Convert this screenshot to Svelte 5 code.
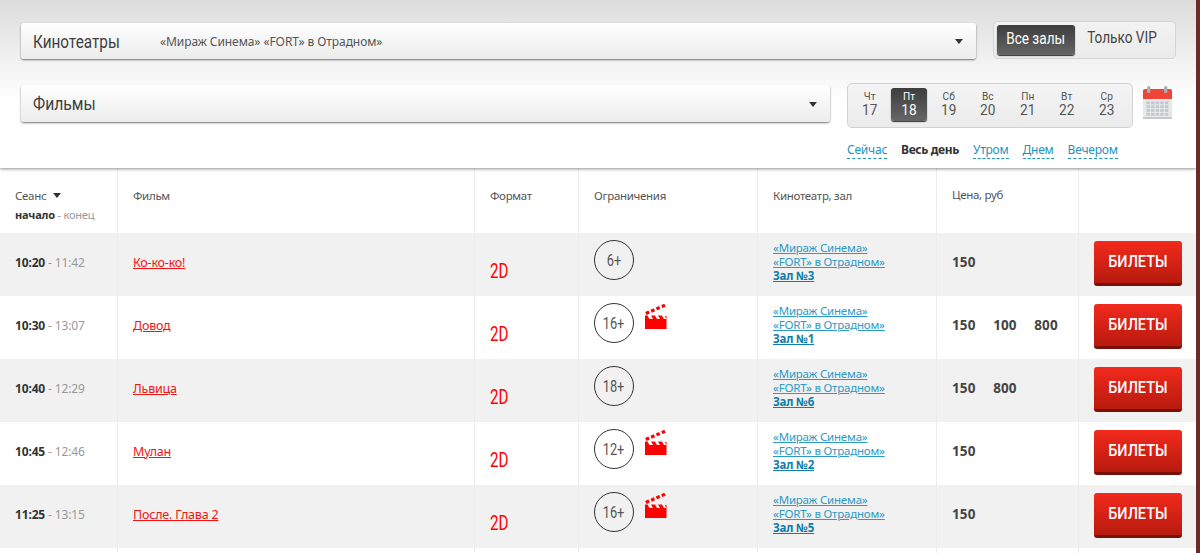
<script>
  const days = [['Чт',17],['Пт',18],['Сб',19],['Вс',20],['Пн',21],['Вт',22],['Ср',23]];
  const times = [['Сейчас',true],['Весь день',false],['Утром',true],['Днем',true],['Вечером',true]];
  const rows = [
    {s:'10:20',e:'11:42',f:'Ко-ко-ко!',a:'6+',c:false,h:3,p:[150]},
    {s:'10:30',e:'13:07',f:'Довод',a:'16+',c:true,h:1,p:[150,100,800]},
    {s:'10:40',e:'12:29',f:'Львица',a:'18+',c:false,h:6,p:[150,800]},
    {s:'10:45',e:'12:46',f:'Мулан',a:'12+',c:true,h:2,p:[150]},
    {s:'11:25',e:'13:15',f:'После. Глава 2',a:'16+',c:true,h:5,p:[150]}
  ];
</script>

<div class="page">
  <header class="filters">
    <div class="line first">
      <div class="select wide">
        <span class="sel-label"><span class="narrow">Кинотеатры</span></span>
        <span class="sel-value">«Мираж Синема» «FORT» в Отрадном»</span>
        <i class="caret"></i>
      </div>
      <div class="toggle">
        <span class="tg active"><span class="narrow">Все залы</span></span>
        <span class="tg vip"><span class="narrow">Только VIP</span></span>
      </div>
    </div>
    <div class="line second">
      <div class="select films">
        <span class="sel-label"><span class="narrow">Фильмы</span></span>
        <i class="caret"></i>
      </div>
      <div class="datecol">
        <div class="daterow">
          <div class="dates">
            {#each days as d, i}
              <div class="day" class:on={i===1}><span class="dn">{d[0]}</span><span class="dd">{d[1]}</span></div>
            {/each}
          </div>
          <svg class="cal" width="29" height="33" viewBox="0 0 29 33">
            <rect x="0" y="3" width="29" height="30" rx="1" fill="#e6e9ea"/>
            <rect x="0" y="31" width="29" height="2" fill="#c6cacc"/>
            <path d="M0 13V5a2 2 0 0 1 2-2h25a2 2 0 0 1 2 2v8z" fill="#f04438"/>
            <rect x="4" y="0" width="3.400" height="7" rx="1.500" fill="#a9aeb0"/>
            <rect x="21" y="0" width="3.400" height="7" rx="1.500" fill="#a9aeb0"/>
            {#each [0,1,2,3] as r}{#each [0,1,2,3,4] as c}
              <rect x={3.500+c*4.600} y={15.500+r*3.800} width="3.400" height="2.800" fill="#c3c8ca"/>
            {/each}{/each}
          </svg>
        </div>
        <div class="times">
          {#each times as t}
            <span class:lnk={t[1]} class:cur={!t[1]}>{t[0]}</span>
          {/each}
        </div>
      </div>
    </div>
  </header>

  <div class="table">
    <div class="row head">
      <div class="c c1"><div>Сеанс <i class="caret small"></i></div><div class="sub"><b>начало</b> <span>- конец</span></div></div>
      <div class="c c2">Фильм</div>
      <div class="c c3">Формат</div>
      <div class="c c4">Ограничения</div>
      <div class="c c5">Кинотеатр, зал</div>
      <div class="c c6 price-h">Цена, руб</div>
      <div class="c c7"></div>
    </div>
    {#each rows as r, i}
      <div class="row body" class:alt={i%2===0}>
        <div class="c c1 time"><b>{r.s}</b> <span>- {r.e}</span></div>
        <div class="c c2 filmcell"><a class="film" href="#f">{r.f}</a></div>
        <div class="c c3 fmt"><span class="narrow2">2D</span></div>
        <div class="c c4 ageline">
          <span class="age"><span class="narrow3">{r.a}</span></span>
          {#if r.c}
            <svg class="clap" width="22" height="25" viewBox="0 0 22 25">
              <path fill="#f00" d="M0 15h21.500v10H0z"/>
              <path fill="#f00" d="M0 11.500h2.500l2 3.500H0zM6 11.500h4l2 3.500H8zM13 11.500h4l2 3.500h-4zM20 12h1.500v3h-.3z"/>
              <path stroke="#f00" stroke-width="3.200" stroke-dasharray="3.600 2.200" fill="none" d="M.8 9.500L20 1.200"/>
            </svg>
          {/if}
        </div>
        <div class="c c5 cinema"><a href="#c">«Мираж Синема»<br>«FORT» в Отрадном»</a><br><a class="hall" href="#h">Зал №{r.h}</a></div>
        <div class="c c6 prices">{#each r.p as p}<span>{p}</span>{/each}</div>
        <div class="c c7 btncell"><span class="buy"><span class="narrow">БИЛЕТЫ</span></span></div>
      </div>
    {/each}
    <div class="row tail">
      <div class="c c1"></div><div class="c c2"></div><div class="c c3"></div><div class="c c4"></div><div class="c c5"></div><div class="c c6"></div><div class="c c7"></div>
    </div>
  </div>
</div>

<style>
  :global(body) { margin: 0; background: #fff; overflow: hidden; }
  .page {
    width: 1200px; height: 553px; overflow: hidden; box-sizing: border-box;
    border-right: 4px solid #6e2a25;
    font-family: "Noto Sans", "Open Sans", sans-serif; color: #444;
  }
  .filters {
    height: 168px; box-sizing: border-box; padding: 23px 20px 0 21px;
    background: linear-gradient(#dcdcdc, #fff 100px);
    box-shadow: 0 1px 3px rgba(0,0,0,.45);
    position: relative;
  }
  .line { display: flex; justify-content: space-between; }
  .first { height: 36px; }
  .second { margin-top: 26px; }
  .select {
    height: 36px; box-sizing: border-box; display: flex; align-items: center; padding: 0 13px 0 12px;
    background: linear-gradient(#fff, #ececec); border-radius: 3px;
    box-shadow: 0 1px 2px rgba(0,0,0,.55);
  }
  .wide { width: 955px; }
  .films { width: 809px; height: 37px; padding-top: 1px; }
  .sel-label { width: 127px; font-family: "Roboto", sans-serif; font-size: 18px; color: #3f3f3f; white-space: nowrap; }
  .films .sel-label { font-size: 18.500px; }
  .narrow { display: inline-block; transform: scaleX(.85); transform-origin: center; white-space: nowrap; }
  .sel-label .narrow { transform-origin: left center; }
  .sel-value { font-size: 12px; letter-spacing: -.08px; color: #555; }
  .caret {
    margin-left: auto; width: 0; height: 0; display: inline-block;
    border: 4.500px solid transparent; border-top: 5px solid #333; border-bottom: 0;
  }
  .caret.small { margin-left: 4px; vertical-align: 2px; }
  .toggle {
    margin-top: -2px; width: 183px; height: 38px; box-sizing: border-box; padding: 3px; display: flex;
    border: 1px solid #d5d5d5; border-radius: 5px; background: linear-gradient(#f2f2f2, #ebebeb);
  }
  .tg {
    font-family: "Roboto", sans-serif; font-size: 16px; line-height: 26px; flex: 1; text-align: center; color: #444; white-space: nowrap;
  }
  .vip { padding-right: 4px; }
  .tg.active {
    flex: 0 0 78px; height: 30px; box-sizing: border-box; padding-top: 1px; color: #fff; border-radius: 3px;
    background: linear-gradient(#3d3d3d, #666); box-shadow: 0 1px 1px #333;
  }
  .datecol { width: 329px; margin-top: -2px; }
  .daterow { display: flex; gap: 10px; }
  .cal { margin-top: 3px; flex: none; }
  .dates {
    width: 286px; height: 45px; box-sizing: border-box; display: flex; padding: 4px 0 0 2.300px;
    border: 1px solid #d2d2d2; border-radius: 5px; background: linear-gradient(#f4f4f4, #ebebeb);
  }
  .day {
    width: 39.400px; height: 33px; text-align: center; display: flex; flex-direction: column; border-radius: 3px;
    color: #555; font-family: "Roboto", sans-serif;
  }
  .day.on { width: 36px; margin: 0 1.700px; color: #fff; background: linear-gradient(#3d3d3d, #666); box-shadow: 0 1px 1px #333; }
  .dn { font-size: 11.500px; line-height: 12px; margin-top: 2px; transform: scaleX(.88); }
  .dd { font-size: 15.500px; line-height: 16px; transform: scaleX(.88); }
  .times { display: flex; gap: 14px; margin-top: 14px; font-size: 12px; letter-spacing: -.22px; line-height: 16px; }
  .lnk { color: #1a93bd; border-bottom: 1px dashed #1a93bd; }
  .cur { font-weight: 700; color: #333; letter-spacing: -.35px; }

  .row { display: flex; }
  .c { box-sizing: border-box; border-right: 1px solid #ececec; }
  .c1 { width: 118px; padding-left: 15px; }
  .c2 { width: 357px; padding-left: 15px; }
  .c3 { width: 104px; padding-left: 15px; }
  .c4 { width: 179px; padding-left: 15px; }
  .c5 { width: 179px; padding-left: 15px; }
  .c6 { width: 142px; padding-left: 15px; }
  .c7 { flex: 1; border-right: 0; }
  .head { height: 65px; font-size: 11.500px; letter-spacing: -.3px; color: #555; }
  .head .c { padding-top: 20px; line-height: 16px; }
  .head .price-h { padding-top: 19px; }
  .sub { margin-top: 3px; font-size: 11px; letter-spacing: -.2px; }
  .sub b { color: #333; }
  .sub span { color: #999; }
  .body { height: 63px; font-size: 12.500px; }
  .body.alt { background: #f1f1f1; }
  .body .c { display: flex; align-items: center; }
  .tail { height: 10px; }
  .body .time { font-size: 12px; letter-spacing: -.15px; gap: 3px; padding-bottom: 5px; }
  .time b { color: #333; }
  .time span { color: #999; }
  .body .filmcell { padding-bottom: 5px; }
  .film { font-size: 12.500px; color: #f01414; letter-spacing: -.2px; }
  .body .fmt { font-family: "Roboto", sans-serif; font-size: 20px; color: #f00; padding-top: 13px; }
  .narrow2 { display: inline-block; transform: scaleX(.76); transform-origin: left center; line-height: 1; }
  .body .ageline { align-items: flex-start; padding-top: 7px; }
  .age {
    width: 40px; height: 40px; box-sizing: border-box; border: 1px solid #333; border-radius: 50%; display: flex; align-items: center; justify-content: center;
    font-family: "Roboto", sans-serif; font-size: 16px; color: #555;
  }
  .narrow3 { display: inline-block; transform: scaleX(.8); }
  .clap { margin: 1px 0 0 11px; }
  .body .cinema { display: block; padding-top: 8px; font-size: 11.500px; line-height: 14px; letter-spacing: -.2px; }
  .cinema a { color: #2c9ac4; }
  .cinema a.hall { color: #0f7ea8; font-weight: 700; }
  .body .prices { gap: 17.500px; font-size: 13.500px; letter-spacing: .15px; font-weight: 700; color: #444; padding-bottom: 5px; }
  .body .btncell { padding-left: 15px; align-items: flex-start; padding-top: 8px; }
  .buy {
    width: 88px; height: 45px; box-sizing: border-box; border-radius: 3px; text-align: center; padding-top: 10px;
    font-family: "Roboto", sans-serif; font-weight: 500; font-size: 17px; color: #fff;
    background: linear-gradient(#f22a1d, #b81a0e); border-bottom: 3px solid #7a1108;
  }
</style>
